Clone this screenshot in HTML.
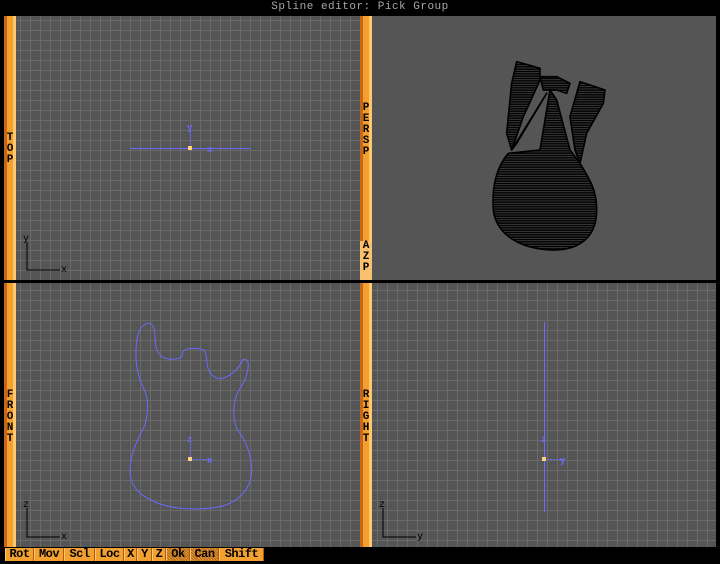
<!DOCTYPE html>
<html><head><style>
*{margin:0;padding:0;box-sizing:border-box}
body{width:720px;height:564px;background:#000;position:relative;overflow:hidden;font-family:"Liberation Mono",monospace}
.title{position:absolute;top:1px;left:0;width:720px;text-align:center;color:#a8a8a8;font-size:11px;letter-spacing:0.5px}
.vp{position:absolute;background-color:#555;background-image:linear-gradient(#6a6a6a 1px,transparent 1px),linear-gradient(90deg,#6a6a6a 1px,transparent 1px);background-size:10px 10px}
.sb{position:absolute;width:12px;background:linear-gradient(90deg,#c8661c 0,#c8661c 3px,#f2a030 3px,#f2a030 9px,#ffc870 9px)}
.lab{position:absolute;width:12px;font:bold 11px "Liberation Mono",monospace;color:#000;text-align:center;line-height:11px}
.tb{position:absolute;top:548px;height:13px;background:#f2a030;font:bold 12px "Liberation Mono",monospace;color:#000;line-height:13px;text-align:center;border-left:1px solid #ffc870;border-right:1px solid #b05a10;letter-spacing:-0.5px}
.dk{background:repeating-linear-gradient(45deg,#b06818 0 1px,#e89838 1px 2px)}
svg{position:absolute;left:0;top:0}
</style></head><body>
<div class="title">Spline editor: Pick Group</div>
<div class="vp" style="left:16px;top:16px;width:344px;height:264px;background-position:4px 4px"></div>
<div class="vp" style="left:372px;top:16px;width:344px;height:264px;background-image:none"></div>
<div class="vp" style="left:16px;top:283px;width:344px;height:264px;background-position:4px 7px"></div>
<div class="vp" style="left:372px;top:283px;width:344px;height:264px;background-position:5px 7px"></div>
<div class="sb" style="left:4px;top:16px;height:264px"></div>
<div class="sb" style="left:360px;top:16px;height:264px"></div>
<div class="sb" style="left:4px;top:283px;height:264px"></div>
<div class="sb" style="left:360px;top:283px;height:264px"></div>
<div class="lab" style="left:4px;top:133px">T<br>O<br>P</div>
<div class="lab" style="left:360px;top:103px">P<br>E<br>R<br>S<br>P</div>
<div class="lab" style="left:360px;top:241px;background:#f8c070;height:39px">A<br>Z<br>P</div>
<div class="lab" style="left:4px;top:390px">F<br>R<br>O<br>N<br>T</div>
<div class="lab" style="left:360px;top:390px">R<br>I<br>G<br>H<br>T</div>
<svg width="720" height="564" viewBox="0 0 720 564">
<defs><pattern id="h" width="12" height="7" patternUnits="userSpaceOnUse"><rect width="12" height="7" fill="#000"/><rect y="4" width="12" height="2" fill="#555"/></pattern></defs>
<g stroke="#000" stroke-width="1" font-family="Liberation Mono" font-size="10" fill="#000">
<path d="M27 242V270H60" fill="none"/><text x="23" y="241" stroke="none">y</text><text x="61" y="272" stroke="none">x</text>
<path d="M27 508V537H60" fill="none"/><text x="23" y="507" stroke="none">z</text><text x="61" y="539" stroke="none">x</text>
<path d="M383 508V537H416" fill="none"/><text x="379" y="507" stroke="none">z</text><text x="417" y="539" stroke="none">y</text>
</g>
<g stroke="#6a6aff" fill="none" stroke-width="1">
<path d="M130 148.5H250"/><path d="M190.5 131V148" stroke-dasharray="2 1"/>
<path d="M190.5 443V459" stroke-dasharray="2 1"/><path d="M190 459.5H212" stroke-dasharray="2 1"/>
<path d="M544.5 322V512"/><path d="M544 459.5H565" stroke-dasharray="2 1"/>
<path transform="translate(120 315) scale(0.3333)" stroke-width="3" stroke-linejoin="round" d="M90 25C100 30 105 45 105 70C106 95 110 115 130 128C150 135 175 135 185 125C188 105 195 100 220 100C250 100 258 105 260 130C262 170 270 185 300 192C330 185 355 165 368 135C375 130 385 135 385 150C383 190 365 210 352 235C338 270 338 310 350 340C380 380 395 420 395 470C392 520 360 560 300 575C250 585 180 585 130 570C60 548 30 515 30 465C32 410 55 370 75 330C85 290 85 255 75 230C60 200 50 170 48 130C47 90 50 60 62 40C70 30 80 22 90 25Z"/>
</g>
<g fill="#6a6aff" font-family="Liberation Mono" font-size="9" font-weight="bold">
<text x="187" y="130">y</text><text x="207" y="152">x</text>
<text x="187" y="442">z</text><text x="207" y="463">x</text>
<text x="541" y="442">z</text><text x="560" y="463">y</text>
</g>
<rect x="188" y="146" width="4" height="4" fill="#ffd080"/>
<rect x="188" y="457" width="4" height="4" fill="#ffd080"/>
<rect x="542" y="457" width="4" height="4" fill="#ffd080"/>
<g transform="translate(480 50) scale(0.3333)" fill="url(#h)" stroke="#000" stroke-width="5" stroke-linejoin="round">
<path d="M110 35L180 55L180 90L130 200L95 300L80 250L95 100Z"/>
<path d="M180 80L230 80L270 100L260 130L230 120L190 120Z"/>
<path d="M300 95L375 120L370 160L320 250L300 340L285 300L270 200Z"/>
<path d="M270 300L230 150L210 120L180 300L85 310C50 350 35 410 40 480C50 560 130 598 220 600C300 600 350 560 350 480C350 420 330 390 300 340Z"/>
<path d="M95 300L200 130L110 280Z"/>
</g>
</svg>
<div class="tb" style="left:5px;width:29px">Rot</div>
<div class="tb" style="left:34px;width:30px">Mov</div>
<div class="tb" style="left:64px;width:31px">Scl</div>
<div class="tb" style="left:95px;width:29px">Loc</div>
<div class="tb" style="left:124px;width:13px">X</div>
<div class="tb" style="left:137px;width:15px">Y</div>
<div class="tb" style="left:152px;width:14px">Z</div>
<div class="tb dk" style="left:166px;width:24px">Ok</div>
<div class="tb dk" style="left:190px;width:29px">Can</div>
<div class="tb" style="left:219px;width:45px">Shift</div>
</body></html>
